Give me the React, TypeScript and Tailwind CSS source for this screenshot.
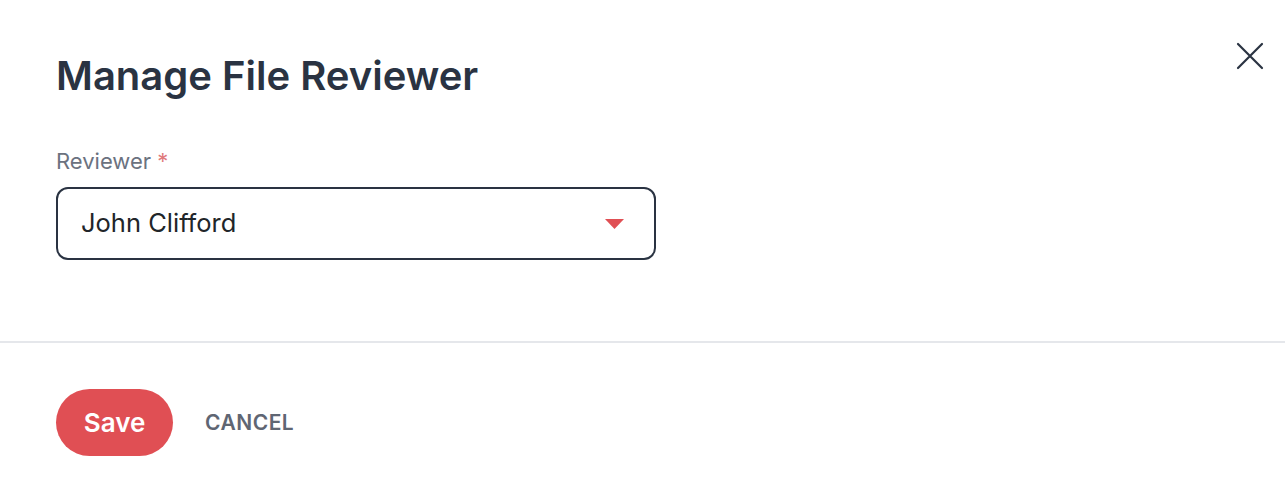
import * as React from "react";

export default function App() {
  return (
    <div
      className="relative h-[482px] w-[1285px] bg-white"
      style={{ fontFamily: "Inter, 'Noto Sans', sans-serif" }}
    >
      <button className="absolute right-[21px] top-[42px] text-[#2a3342]" aria-label="Close">
        <svg width="28" height="28" viewBox="0 0 28 28" fill="none" stroke="currentColor" strokeWidth="2.2" strokeLinecap="round">
          <path d="M2 2 L26 26 M26 2 L2 26" />
        </svg>
      </button>

      <div className="px-[56px] pt-[50px]">
        <h1 className="text-[40px] font-semibold leading-[52px] text-[#2a3342]">Manage File Reviewer</h1>

        <div className="mt-[44px] w-[600px]">
          <label className="block text-[22px] leading-[30px] text-[#6b7280]">
            Reviewer <span className="text-[#e0797b]">*</span>
          </label>
          <div className="mt-[11px] flex h-[73px] items-center justify-between rounded-[12px] border-2 border-[#2a3342] pl-[23px] pr-[30px]">
            <span className="text-[25.5px] text-[#212529]">John Clifford</span>
            <svg width="19" height="10" viewBox="0 0 19 10">
              <path d="M0 0 H19 L9.5 10 Z" fill="#e04f54" />
            </svg>
          </div>
        </div>
      </div>

      <div className="mt-[81px] h-[2px] w-full bg-[#e5e7eb]" />

      <div className="flex items-center gap-[32px] px-[56px] pt-[46px]">
        <button className="h-[67px] w-[117px] rounded-full bg-[#e04f54] text-[26px] font-semibold text-white">
          Save
        </button>
        <button className="text-[21px] font-semibold tracking-[0.5px] text-[#5f6673]">CANCEL</button>
      </div>
    </div>
  );
}
